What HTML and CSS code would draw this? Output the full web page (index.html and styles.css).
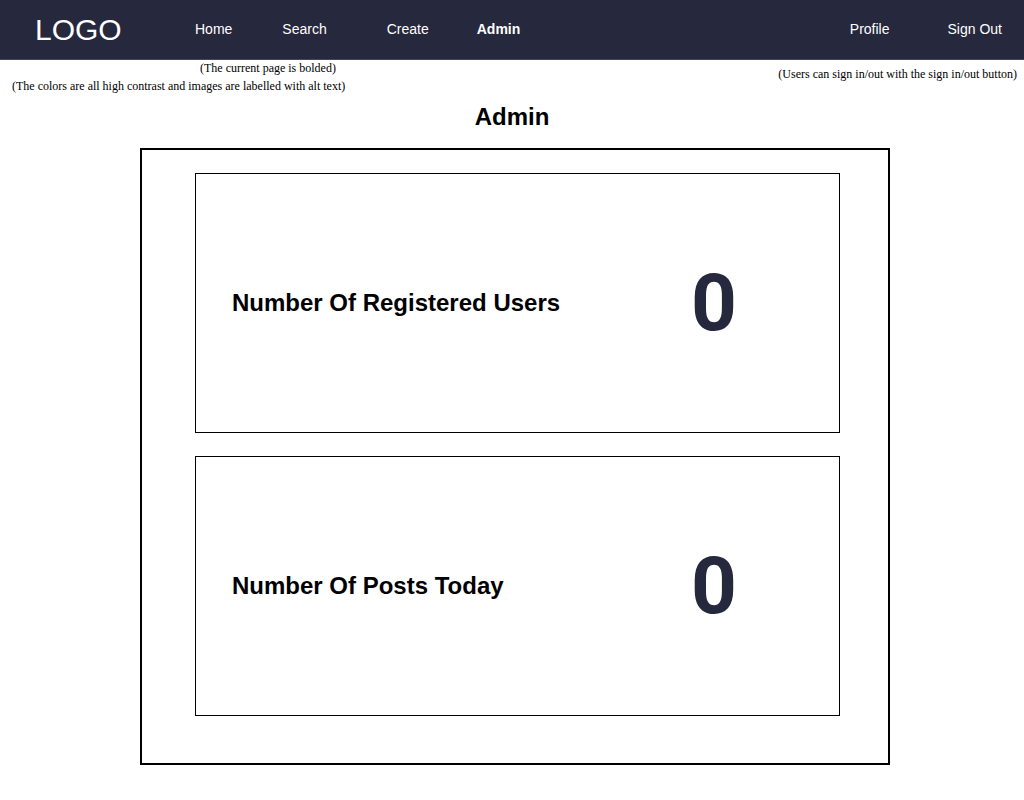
FILE: index.html
```html
<!DOCTYPE html>
<html lang="en">
<head>
<meta charset="utf-8">
<title>Admin</title>
<link rel="stylesheet" href="styles.css">
</head>
<body>
<header class="navbar">
  <a class="logo" href="#">LOGO</a>
  <nav class="links" aria-label="Main">
    <a class="link home" href="#">Home</a>
    <a class="link search" href="#">Search</a>
    <a class="link create" href="#">Create</a>
    <a class="link current" href="#" aria-current="page">Admin</a>
  </nav>
  <nav class="account" aria-label="Account">
    <a class="link" href="#">Profile</a>
    <a class="link" href="#">Sign Out</a>
  </nav>
</header>
<div class="notes">
  <div class="notes-left">
    <p class="note note-page">(The current page is bolded)</p>
    <p class="note">(The colors are all high contrast and images are labelled with alt text)</p>
  </div>
  <p class="note note-account">(Users can sign in/out with the sign in/out button)</p>
</div>
<main class="main">
  <h1 class="title">Admin</h1>
  <div class="panel">
    <section class="card">
      <h2 class="label">Number Of Registered Users</h2>
      <p class="count">0</p>
    </section>
    <section class="card">
      <h2 class="label">Number Of Posts Today</h2>
      <p class="count">0</p>
    </section>
  </div>
</main>
</body>
</html>
```
FILE: styles.css
```css
* { box-sizing: border-box; }
body {
  margin: 0;
  background: #fff;
  color: #000;
  font-family: "Liberation Sans", Arial, sans-serif;
}
h1, h2, p { margin: 0; }
.navbar {
  display: flex;
  align-items: center;
  min-height: 60px;
  padding: 0 22px 0 35px;
  background: #26283d;
  border-bottom: 1px solid #44465a;
}
.logo {
  width: 160px;
  color: #fff;
  font-size: 30px;
  line-height: 36px;
  text-decoration: none;
}
.links, .account { display: flex; padding-bottom: 2px; }
.account { gap: 58px; margin-left: auto; }
.link {
  color: #fff;
  font-size: 14px;
  line-height: 20px;
  text-decoration: none;
}
.home { margin-right: 50px; }
.search { margin-right: 60px; }
.create { margin-right: 48px; }
.current { font-weight: bold; }
.notes {
  display: flex;
  justify-content: space-between;
  padding: 0 7px 0 12px;
}
.note {
  font-family: "Liberation Serif", "Times New Roman", serif;
  font-size: 12px;
  line-height: 18px;
}
.note-page { padding-left: 188px; line-height: 17px; }
.note-account { padding-top: 5px; }
.main { padding: 7px 134px 35px 140px; }
.title {
  font-size: 24px;
  line-height: 30px;
  text-align: center;
  padding-right: 6px;
  margin-bottom: 16px;
}
.panel {
  display: grid;
  gap: 23px;
  padding: 23px 48px 47px 53px;
  border: 2px solid #000;
}
.card {
  display: grid;
  grid-template-columns: 1fr 250px;
  align-items: center;
  min-height: 260px;
  padding-left: 36px;
  border: 1px solid #000;
}
.label { font-size: 24px; line-height: 30px; }
.count {
  color: #26283d;
  font-family: Roboto, "Liberation Sans", sans-serif;
  font-size: 80px;
  font-weight: bold;
  line-height: 94px;
  text-align: center;
}
```
